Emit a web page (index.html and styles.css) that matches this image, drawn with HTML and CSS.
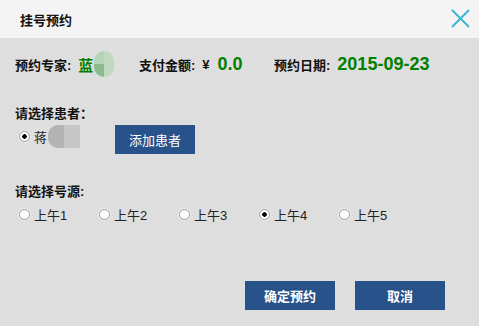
FILE: index.html
```html
<!DOCTYPE html>
<html lang="zh-CN">
<head>
    <meta charset="UTF-8">
    <title>挂号预约</title>
    <link rel="stylesheet" href="styles.css">
</head>
<body>
    <div class="dialog">
        <div class="dialog-header">
            <span class="dialog-title">挂号预约</span>
            <span class="close-btn">
                <svg width="19" height="19" viewBox="0 0 19 19">
                    <path d="M1 1 L18 18 M18 1 L1 18" stroke="#3bb5d6" stroke-width="2" fill="none"/>
                </svg>
            </span>
        </div>

        <div class="dialog-body">
            <div class="info-row">
                <div class="info-item expert">
                    <span class="info-label">预约专家:</span>
                    <span class="info-value name">蓝</span>
                    <span class="mosaic green-mosaic"></span>
                </div>
                <div class="info-item fee">
                    <span class="info-label">支付金额:</span>
                    <span class="yen">¥</span>
                    <span class="info-value">0.0</span>
                </div>
                <div class="info-item date">
                    <span class="info-label">预约日期:</span>
                    <span class="info-value">2015-09-23</span>
                </div>
            </div>

            <div class="section-title patient-title">请选择患者：</div>
            <div class="patient-row">
                <label class="radio-option">
                    <input type="radio" name="patient" checked>
                    <span>蒋</span>
                    <span class="mosaic gray-mosaic"></span>
                </label>
                <a href="#" class="btn add-btn">添加患者</a>
            </div>

            <div class="section-title source-title">请选择号源:</div>
            <div class="source-row">
                <label class="radio-option source-option"><input type="radio" name="source"><span>上午1</span></label>
                <label class="radio-option source-option"><input type="radio" name="source"><span>上午2</span></label>
                <label class="radio-option source-option"><input type="radio" name="source"><span>上午3</span></label>
                <label class="radio-option source-option"><input type="radio" name="source" checked><span>上午4</span></label>
                <label class="radio-option source-option"><input type="radio" name="source"><span>上午5</span></label>
            </div>

            <div class="footer">
                <a href="#" class="btn footer-btn">确定预约</a>
                <a href="#" class="btn footer-btn">取消</a>
            </div>
        </div>
    </div>
</body>
</html>
```

FILE: styles.css
```css
/* Dialog layout */
body {
    margin: 0;
    padding: 0;
    font-family: "Liberation Sans", "Noto Sans CJK SC", sans-serif;
    font-size: 13px;
    color: #111;
    background-color: #dedede;
}

.dialog {
    width: 479px;
    height: 326px;
    background-color: #dedede;
}

.dialog-header {
    height: 38px;
    background-color: #f4f4f4;
    display: flex;
    align-items: center;
    justify-content: space-between;
    padding: 0 9px 0 20px;
}

.dialog-title {
    font-weight: bold;
    font-size: 13px;
}

.close-btn {
    display: flex;
    margin-top: -1px;
}

.dialog-body {
    padding: 0 15px;
}

.info-row {
    display: flex;
    align-items: center;
    height: 28px;
    margin-top: 12px;
}

.info-item {
    display: flex;
    align-items: center;
}

.info-label {
    font-weight: bold;
    margin-right: 7px;
}

.info-value {
    color: #008000;
    font-weight: bold;
    font-size: 18px;
}

.info-value.name {
    font-size: 15px;
}

.expert {
    width: 124px;
}

.fee {
    width: 135px;
}

.yen {
    font-weight: bold;
    margin-right: 8px;
}

.mosaic {
    display: inline-block;
}

.green-mosaic {
    width: 20px;
    height: 26px;
    border-radius: 10px;
    margin-left: 1px;
    background:
        linear-gradient(to right, transparent 50%, #bfd8bf 50%),
        linear-gradient(to bottom, #b5d3b5 50%, #8bbb8b 50%);
}

.section-title {
    font-weight: bold;
}

.patient-title {
    margin-top: 25px;
}

.patient-row {
    display: flex;
    align-items: center;
    height: 30px;
    margin-top: -1px;
}

.radio-option {
    display: flex;
    align-items: center;
    color: #222;
}

.radio-option input {
    appearance: none;
    -webkit-appearance: none;
    width: 11px;
    height: 11px;
    margin: 0 4px 0 4px;
    border: 1px solid #9a9a9a;
    border-radius: 50%;
    background-color: #fff;
    box-shadow: 0 0 0 1px #eee;
}

.radio-option input:checked {
    background: radial-gradient(circle, #000 0, #000 2px, #fff 2.5px);
}

.gray-mosaic {
    width: 32px;
    height: 23px;
    border-radius: 10px 0 0 10px;
    margin-left: 1px;
    background: linear-gradient(to right, #b3b3b3 50%, #c6c6c6 50%);
}

.btn {
    display: inline-flex;
    align-items: center;
    justify-content: center;
    background-color: #28528a;
    color: #fff;
    text-decoration: none;
}

.add-btn {
    width: 80px;
    height: 29px;
    margin-left: 35px;
    margin-top: 6px;
}

.source-title {
    margin-top: 30px;
}

.source-row {
    display: flex;
    align-items: center;
    margin-top: 5px;
}

.source-option {
    width: 80px;
}

.footer {
    display: flex;
    justify-content: flex-end;
    gap: 20px;
    margin-top: 57px;
    padding-right: 19px;
}

.footer-btn {
    width: 90px;
    height: 29px;
    font-weight: bold;
}
```
